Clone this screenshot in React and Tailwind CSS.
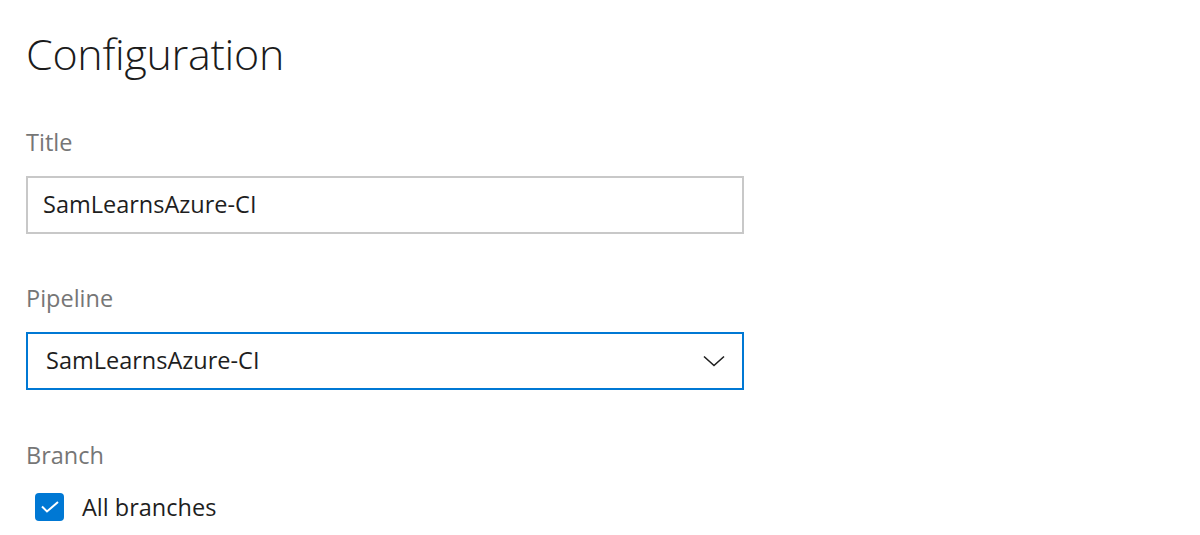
import React from 'react';

function Label({ children, className = '' }) {
  return <div className={`text-[23.5px] leading-[32px] text-[#767676] ${className}`}>{children}</div>;
}

function Chevron() {
  return (
    <svg width="22" height="12" viewBox="0 0 22 12" fill="none">
      <path d="M1 1.5 L11 10.5 L21 1.5" stroke="#1e1e1e" strokeWidth="1.6" />
    </svg>
  );
}

function CheckIcon() {
  return (
    <svg width="18" height="12" viewBox="0 0 18 12" fill="none">
      <path d="M1 5.5 L6 10.5 L17 1" stroke="#ffffff" strokeWidth="2" />
    </svg>
  );
}

export default function App() {
  return (
    <div
      className="w-[1200px] h-[535px] overflow-hidden bg-white pl-[26px] pt-[24px]"
      style={{ fontFamily: '"Segoe UI", "Open Sans", "Noto Sans", sans-serif' }}
    >
      <h1 className="text-[43px] leading-[60px] font-light text-[#1b1b1b] tracking-[-0.3px]">Configuration</h1>

      <Label className="mt-[42px]">Title</Label>
      <div className="mt-[18px] flex h-[58px] w-[718px] items-center border-2 border-[#c8c8c8] px-[15px] text-[23.5px] text-[#1e1e1e]">
        SamLearnsAzure-CI
      </div>

      <Label className="mt-[48px]">Pipeline</Label>
      <div className="mt-[18px] flex h-[58px] w-[718px] items-center justify-between border-2 border-[#0078d4] pl-[18px] pr-[17px] text-[23.5px] text-[#1e1e1e]">
        <span>SamLearnsAzure-CI</span>
        <Chevron />
      </div>

      <Label className="mt-[49px]">Branch</Label>
      <div className="mt-[20px] flex items-center gap-[18px] pl-[9px]">
        <div className="flex h-[28px] w-[29px] items-center justify-center rounded-[4px] bg-[#0078d4]">
          <CheckIcon />
        </div>
        <span className="text-[23.5px] leading-[32px] text-[#1e1e1e]">All branches</span>
      </div>
    </div>
  );
}
